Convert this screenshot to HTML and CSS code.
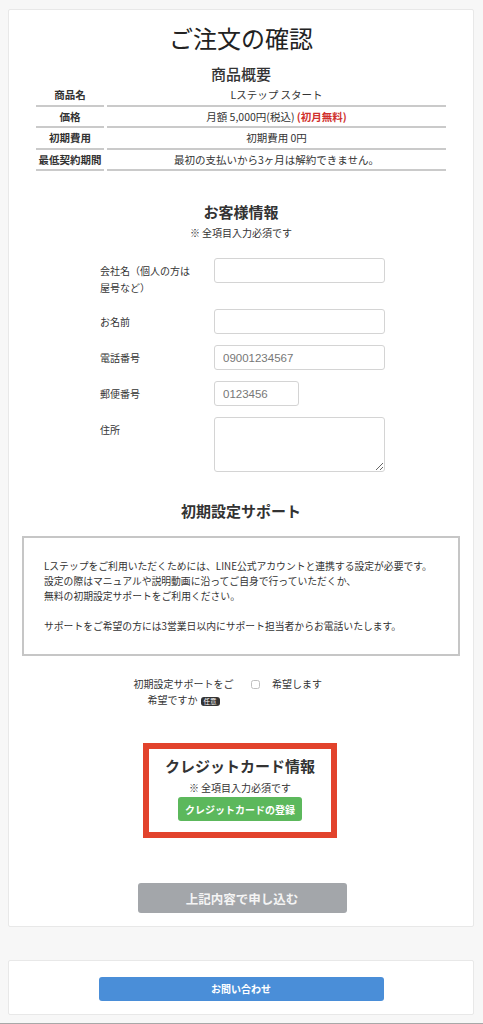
FILE: index.html
```
<!DOCTYPE html>
<html lang="ja">
<head>
    <meta charset="UTF-8">
    <meta name="viewport" content="width=device-width, initial-scale=1.0">
    <title>ご注文の確認</title>
    <link rel="stylesheet" href="styles.css">
</head>
<body>
    <div class="card main">
        <h1>ご注文の確認</h1>

        <h2 class="h-summary">商品概要</h2>
        <div class="summary">
            <div class="s-label">商品名</div>
            <div class="s-value">Lステップ スタート</div>
            <div class="s-label">価格</div>
            <div class="s-value">月額 5,000円(税込) <span class="free">(初月無料)</span></div>
            <div class="s-label">初期費用</div>
            <div class="s-value">初期費用 0円</div>
            <div class="s-label">最低契約期間</div>
            <div class="s-value">最初の支払いから3ヶ月は解約できません。</div>
        </div>

        <h2 class="h-customer">お客様情報</h2>
        <p class="note">※ 全項目入力必須です</p>

        <form class="customer">
            <div class="row">
                <label class="f-label" for="company">会社名（個人の方は屋号など）</label>
                <input type="text" id="company" class="f-input">
            </div>
            <div class="row">
                <label class="f-label" for="name">お名前</label>
                <input type="text" id="name" class="f-input">
            </div>
            <div class="row">
                <label class="f-label" for="tel">電話番号</label>
                <input type="text" id="tel" class="f-input" placeholder="09001234567">
            </div>
            <div class="row">
                <label class="f-label" for="zip">郵便番号</label>
                <input type="text" id="zip" class="f-input short" placeholder="0123456">
            </div>
            <div class="row">
                <label class="f-label" for="address">住所</label>
                <textarea id="address" class="f-input area"></textarea>
            </div>
        </form>

        <h2 class="h-support">初期設定サポート</h2>
        <div class="support-box">
            Lステップをご利用いただくためには、LINE公式アカウントと連携する設定が必要です。<br>
            設定の際はマニュアルや説明動画に沿ってご自身で行っていただくか、<br>
            無料の初期設定サポートをご利用ください。<br>
            <br>
            サポートをご希望の方には3営業日以内にサポート担当者からお電話いたします。
        </div>

        <div class="support-row">
            <div class="support-q">初期設定サポートをご希望ですか<span class="badge">任意</span></div>
            <label class="check"><input type="checkbox"> 希望します</label>
        </div>

        <div class="credit">
            <h2 class="h-credit">クレジットカード情報</h2>
            <p class="note credit-note">※ 全項目入力必須です</p>
            <button type="button" class="btn-card">クレジットカードの登録</button>
        </div>

        <div class="submit-wrap">
            <button type="button" class="btn-submit">上記内容で申し込む</button>
        </div>
    </div>

    <div class="card contact">
        <button type="button" class="btn-contact">お問い合わせ</button>
    </div>

    <div class="bottom-bar"></div>
</body>
</html>
```

FILE: styles.css
```
body {
    margin: 0;
    padding: 9px 9px 0 8px;
    background-color: #f7f7f7;
    font-family: "Noto Sans CJK JP", "Noto Sans", sans-serif;
    color: #333;
}
.card {
    background-color: white;
    border: 1px solid #e8e8e8;
    border-radius: 2px;
}
.main {
    padding: 11px 0 13px;
}
h1 {
    margin: 0;
    text-align: center;
    font-size: 24px;
    line-height: 34px;
    font-weight: 400;
    color: #222;
}
h2 {
    margin: 0;
    text-align: center;
    font-size: 15px;
    line-height: 20px;
    font-weight: bold;
    color: #333;
}
.h-summary {
    margin-top: 8px;
    line-height: 22px;
    font-weight: 500;
}
.summary {
    width: 410px;
    margin: 0 auto;
    display: grid;
    grid-template-columns: 68px 1fr;
    column-gap: 3px;
    font-size: 10.5px;
}
.s-label, .s-value {
    height: 19.5px;
    line-height: 19.5px;
    border-bottom: 2px solid #cacaca;
    text-align: center;
}
.s-label {
    font-weight: bold;
}
.free {
    color: #d0302c;
    font-weight: bold;
}
.h-customer {
    margin-top: 31px;
}
.note {
    margin: 4px 0 0;
    text-align: center;
    font-size: 10px;
    line-height: 14px;
}
.customer {
    margin: 18px 0 0 91px;
}
.row {
    display: flex;
    align-items: flex-start;
    margin-bottom: 11px;
}
.f-label {
    width: 96px;
    margin-right: 18px;
    padding: 4px 0 2px;
    font-size: 10px;
    line-height: 17px;
}
.f-input {
    width: 171px;
    height: 25px;
    box-sizing: border-box;
    border: 1px solid #d4d4d4;
    border-radius: 3px;
    padding: 0 8px;
    font-family: "Liberation Sans", "Noto Sans", sans-serif;
    font-size: 11.5px;
    color: #777;
}
.f-input::placeholder {
    color: #777;
}
.short {
    width: 85px;
}
.area {
    height: 55px;
    resize: vertical;
}
.h-support {
    margin-top: 29px;
}
.support-box {
    margin: 15px 13px 0;
    border: 2px solid #c6c6c6;
    padding: 21px 20px 20px;
    font-size: 9.8px;
    line-height: 15px;
    white-space: nowrap;
}
.support-row {
    display: flex;
    align-items: flex-start;
    margin: 20px 0 0 124px;
    font-size: 10px;
    line-height: 16px;
}
.support-q {
    width: 101px;
    text-align: center;
}
.badge {
    display: inline-block;
    margin-left: 3px;
    background-color: #333;
    color: white;
    font-size: 6.5px;
    line-height: 9px;
    padding: 0 3px;
    border-radius: 3px;
    vertical-align: middle;
}
.check {
    display: flex;
    align-items: center;
    margin-left: 17px;
}
.check input {
    width: 9px;
    height: 9px;
    margin: 0 12px 0 0;
    opacity: 0.45;
}
.credit {
    width: 182px;
    margin: 35px auto 0;
    border: 6px solid #e2432c;
    padding: 7px 0 11px;
    text-align: center;
    position: relative;
    left: -1px;
}
.credit-note {
    margin-top: 5px;
}
.btn-card {
    display: block;
    margin: 2px auto 0;
    width: 124px;
    height: 24px;
    border: none;
    border-radius: 3px;
    background-color: #5cb85c;
    color: white;
    font-family: inherit;
    font-size: 10px;
    font-weight: bold;
}
.submit-wrap {
    margin-top: 45px;
    text-align: center;
}
.btn-submit {
    width: 209px;
    height: 30px;
    border: none;
    border-radius: 3px;
    background-color: #a3a6aa;
    color: #f4f4f4;
    font-family: inherit;
    font-size: 12.5px;
    font-weight: bold;
    position: relative;
    left: 1px;
}
.contact {
    margin-top: 33px;
    padding: 13px 0;
    text-align: center;
}
.btn-contact {
    width: 285px;
    height: 24px;
    border: none;
    border-radius: 3px;
    background-color: #4a8ed8;
    color: white;
    font-family: inherit;
    font-size: 10px;
    font-weight: bold;
}
.bottom-bar {
    height: 4px;
    margin: 8px -9px 0 -8px;
    border-top: 1px solid #a8a8a8;
    background-color: #d6d6d6;
}
```
